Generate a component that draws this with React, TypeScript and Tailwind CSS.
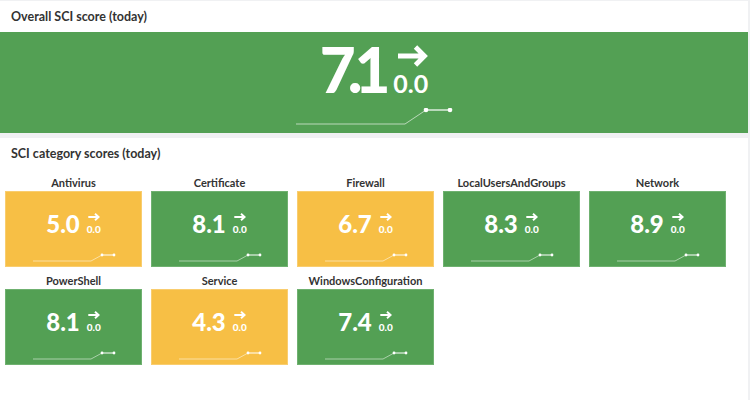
import React from "react";

type Cat = { name: string; score: string; color: "green" | "orange" };

const cats: Cat[] = [
  { name: "Antivirus", score: "5.0", color: "orange" },
  { name: "Certificate", score: "8.1", color: "green" },
  { name: "Firewall", score: "6.7", color: "orange" },
  { name: "LocalUsersAndGroups", score: "8.3", color: "green" },
  { name: "Network", score: "8.9", color: "green" },
  { name: "PowerShell", score: "8.1", color: "green" },
  { name: "Service", score: "4.3", color: "orange" },
  { name: "WindowsConfiguration", score: "7.4", color: "green" },
];

function SmallArrow() {
  return (
    <svg width="12" height="8" viewBox="0 0 12 8" className="block">
      <path d="M0.3 4 H10.6 M7 0.7 L10.6 4 L7 7.3" fill="none" stroke="white" strokeWidth="1.9" />
    </svg>
  );
}

function BigArrow() {
  return (
    <svg width="30" height="22" viewBox="0 0 30 22" className="block">
      <path d="M0 11 H26.5 M17.5 2 L26.5 11 L17.5 20" fill="none" stroke="white" strokeWidth="4.8" />
    </svg>
  );
}

function SmallSpark() {
  return (
    <svg width="84" height="10" viewBox="0 0 84 10" className="block">
      <polyline points="1,8 59,8 70,2" fill="none" stroke="rgba(255,255,255,0.5)" strokeWidth="1" />
      <line x1="70" y1="2" x2="82" y2="2" stroke="white" strokeWidth="1" />
      <circle cx="70" cy="2" r="1.4" fill="white" />
      <circle cx="82" cy="2" r="1.4" fill="white" />
    </svg>
  );
}

function BigSpark() {
  return (
    <svg width="158" height="18" viewBox="0 0 158 18" className="block">
      <polyline points="1,16 110,16 131,2" fill="none" stroke="rgba(255,255,255,0.6)" strokeWidth="1" />
      <line x1="131" y1="2" x2="155" y2="2" stroke="white" strokeWidth="1.2" />
      <circle cx="131" cy="2" r="2.3" fill="white" />
      <circle cx="155" cy="2" r="2.3" fill="white" />
    </svg>
  );
}

function Tile({ c }: { c: Cat }) {
  const bg =
    c.color === "green"
      ? "bg-[#53a054] border-[#6fb170]"
      : "bg-[#f7bf45] border-[#f9cd6f]";
  return (
    <div className="flex flex-col">
      <div className="h-[16px] text-center text-[11px] leading-[16px] font-bold text-[#333333] whitespace-nowrap">
        {c.name}
      </div>
      <div className={`h-[76px] border ${bg} flex flex-col items-center pt-[20px]`}>
        <div className="flex items-end gap-[7px]">
          <div className="text-[24px] leading-none font-black text-white">{c.score}</div>
          <div className="flex flex-col items-center mb-[2px]">
            <SmallArrow />
            <div className="mt-[3px] text-[10px] leading-none font-black text-white">0.0</div>
          </div>
        </div>
        <div className="mt-[17px]">
          <SmallSpark />
        </div>
      </div>
    </div>
  );
}

export default function App() {
  return (
    <div
      className="w-[750px] h-[400px] overflow-hidden bg-[#f0f1f3] pt-[1px] pr-[2px]"
      style={{ fontFamily: "Lato, 'Noto Sans', sans-serif" }}
    >
      <div className="bg-white">
        <div className="h-[31px] pl-[11px] pt-[8px] text-[12.5px] leading-[16px] font-bold text-[#333333]">
          Overall SCI score (today)
        </div>
        <div className="h-[101px] bg-[#53a054] flex flex-col items-center pt-[6px]">
          <div className="flex items-end gap-[11px]">
            <div className="text-[62px] leading-none font-black text-white tracking-[-8px]">7.1</div>
            <div className="flex flex-col items-end mb-[4px]">
              <BigArrow />
              <div className="mt-[4px] text-[25px] leading-none font-bold text-white">0.0</div>
            </div>
          </div>
          <div className="mt-[8px]">
            <BigSpark />
          </div>
        </div>
      </div>
      <div className="mt-[5px] bg-white h-[300px]">
        <div className="pl-[11px] pt-[8px] h-[37px] text-[12.5px] leading-[16px] font-bold text-[#333333]">
          SCI category scores (today)
        </div>
        <div className="grid grid-cols-[repeat(5,137px)] gap-x-[9px] gap-y-[6px] pl-[5px]">
          {cats.map((c) => (
            <Tile key={c.name} c={c} />
          ))}
        </div>
      </div>
    </div>
  );
}
